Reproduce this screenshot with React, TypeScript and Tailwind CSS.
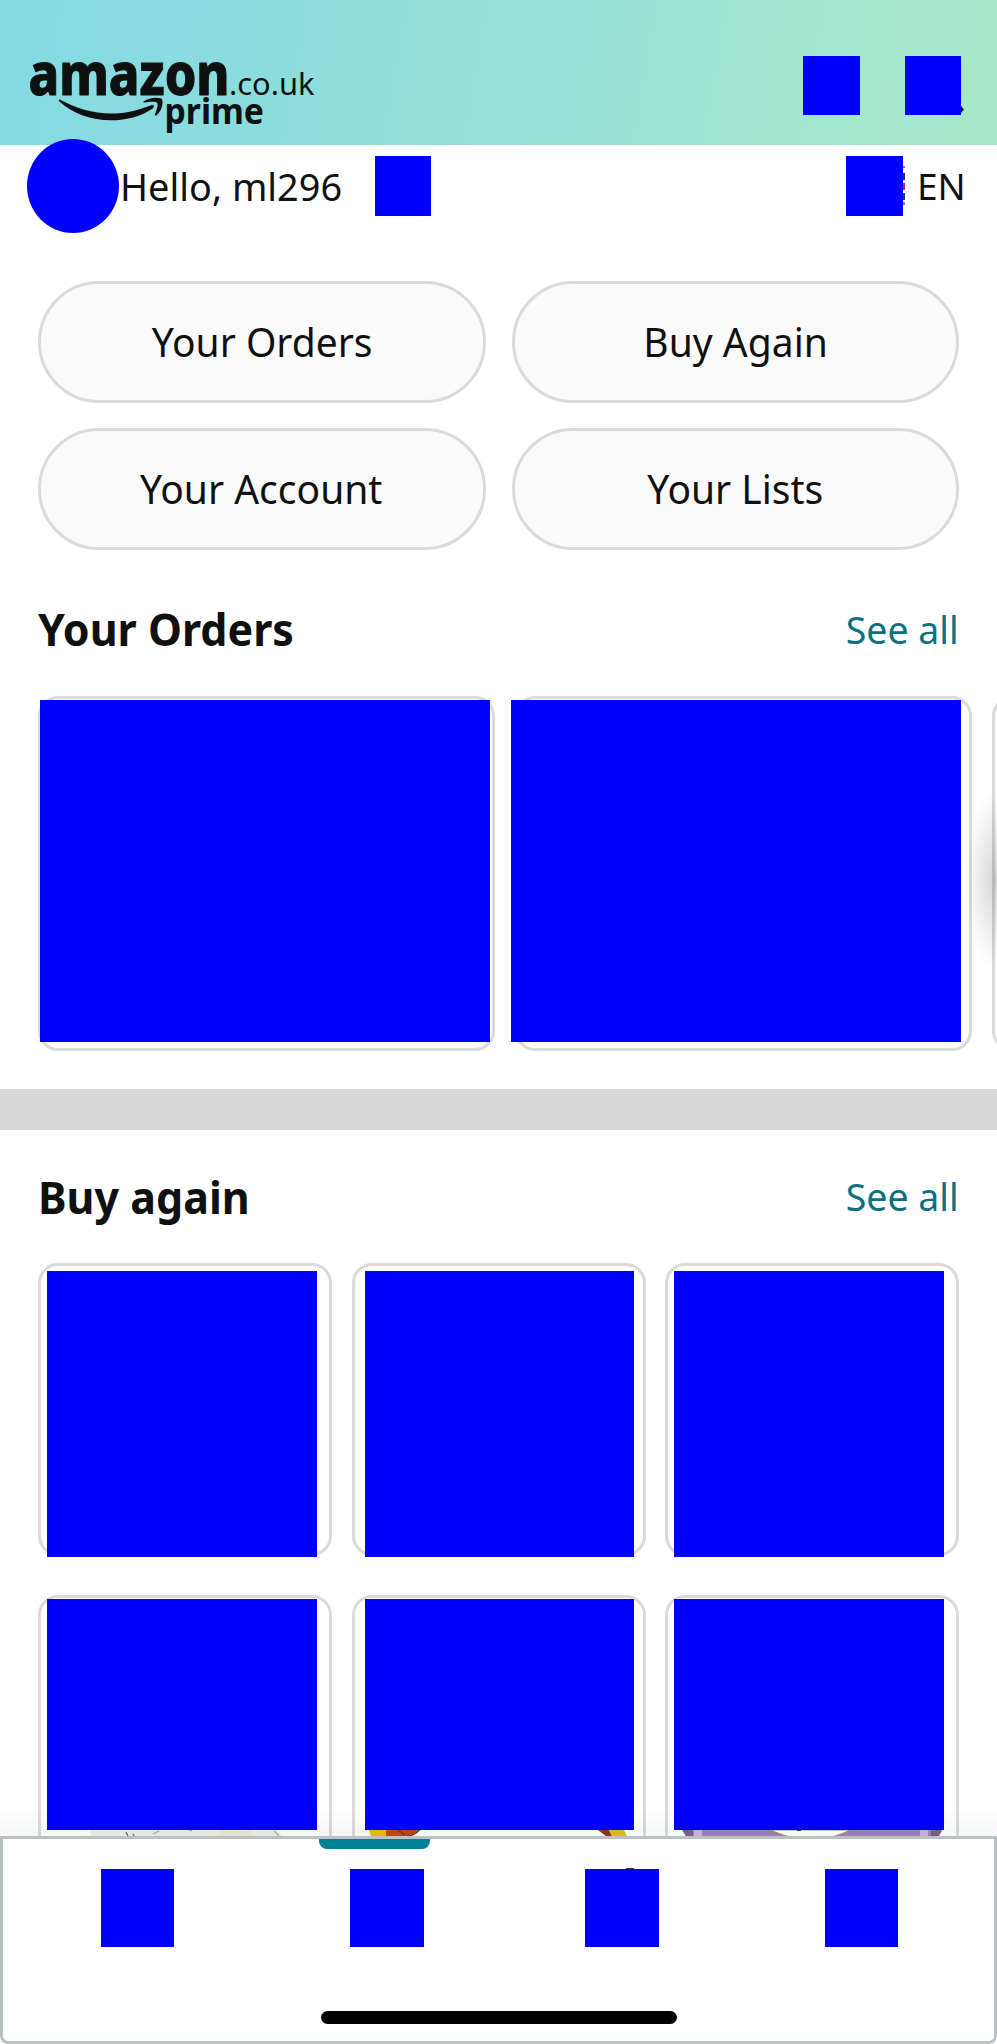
import type { ReactNode } from "react";

function Logo() {
  return (
    <svg
      className="h-[145px] w-[340px] shrink-0"
      viewBox="0 0 340 145"
      fill="#0f1111"
      fontFamily='"Noto Sans", sans-serif'
    >
      <text x="28.5" y="95" fontSize="58.5" fontWeight="800" stroke="#0f1111" strokeWidth="1" textLength="201" lengthAdjust="spacingAndGlyphs">
        amazon
      </text>
      <text x="229" y="94.5" fontSize="31.5" textLength="85.500" lengthAdjust="spacingAndGlyphs">
        .co.uk
      </text>
      <text x="164.500" y="124" fontSize="35.500" fontWeight="700" textLength="99.500" lengthAdjust="spacingAndGlyphs">
        prime
      </text>
      <path d="M60 99.5 C75 108 93 113.500 111 113.500 C126 113.500 139 110 151 105.200 C154 104.500 155 106.500 153 108.200 C142 116 127 120.300 111 120.300 C91 120.300 73 113.500 59.300 101.500 C58.500 100.200 59 99.200 60 99.500 Z" />
      <path d="M143.500 101.500 C149 97.500 156 97 161.500 98.500 C164 101.500 162 111 156.500 115.300 C155 116.300 154.500 115.300 155 114.200 C156.500 110.300 158.500 105 157.300 103 C155.800 101 149 102 145 102.400 C143.300 102.500 142.800 102.200 143.500 101.500 Z" />
    </svg>
  );
}

function Pill({ children }: { children: ReactNode }) {
  return (
    <button className="flex h-[122px] items-center justify-center rounded-full border-[3px] border-[#dadada] bg-[#fafafa] text-[40px]">
      <span className="scale-x-[0.975]">{children}</span>
    </button>
  );
}

function SectionHeader({ title, className }: { title: string; className: string }) {
  return (
    <div className={`flex shrink-0 items-center justify-between pl-[38px] pr-[38px] ${className}`}>
      <h2 className="origin-left scale-x-[0.977] whitespace-nowrap text-[44px] font-bold">{title}</h2>
      <a className="origin-right scale-x-[0.985] whitespace-nowrap text-[38px] text-[#0b7180]">See all</a>
    </div>
  );
}

const card = "shrink-0 border-[3px] border-[#dadada] bg-white rounded-[20px]";

export default function App() {
  return (
    <div className="flex h-[2044px] w-[997px] flex-col overflow-hidden bg-white font-['Noto_Sans',sans-serif] text-[#0f1111]">
      <div className="relative flex h-[1836px] shrink-0 flex-col overflow-hidden">
        <header className="flex h-[145px] shrink-0 justify-between bg-[linear-gradient(100deg,#84d9e3_0%,#8bdddd_28%,#98e1d7_55%,#a3e6d0_78%,#a7e7cb_100%)]">
          <Logo />
          <div className="mr-[33px] mt-[56px] flex items-start gap-[45px]">
            <div className="h-[59px] w-[57px] bg-[#0000ff]" />
            <div className="flex items-end">
              <div className="h-[59px] w-[56px] bg-[#0000ff]" />
              <svg className="mb-[2px] h-[7px] w-[3px]" viewBox="0 0 3 7">
                <path d="M0 0 L3 3.500 L0 7 Z" fill="#0f1111" />
              </svg>
            </div>
          </div>
        </header>

        <div className="relative z-10 flex h-[82px] shrink-0 items-center">
          <div className="ml-[27px] h-[94px] w-[92px] shrink-0 rounded-[50%] bg-[#0000ff]" />
          <span className="ml-[1px] w-[255px] origin-left scale-x-[1.01] whitespace-nowrap pt-[3px] text-[37.5px]">
            Hello, ml296
          </span>
          <div className="h-[60px] w-[56px] shrink-0 bg-[#0000ff]" />
          <div className="ml-auto h-[60px] w-[57px] shrink-0 bg-[#0000ff]" />
          <div className="flex h-[40px] w-[2px] flex-col">
            <div className="h-[2px] bg-[#e05a6a]" />
            <div className="mt-[5px] h-[7px] bg-[#1d3a66]" />
            <div className="mt-[3px] h-[7px] bg-[#d8202f]" />
            <div className="mt-[3px] h-[7px] bg-[#1d3a66]" />
            <div className="mt-[2px] h-[3px] bg-[#e05a6a]" />
          </div>
          <span className="ml-[12px] w-[80px] origin-left scale-x-[1.03] pt-[2px] text-[36px]">EN</span>
        </div>

        <div className="mt-[54px] grid shrink-0 grid-cols-2 gap-x-[26px] gap-y-[25px] px-[38px]">
          <Pill>Your Orders</Pill>
          <Pill>Buy Again</Pill>
          <Pill>Your Account</Pill>
          <Pill>Your Lists</Pill>
        </div>

        <SectionHeader title="Your Orders" className="h-[146px] pt-[12px]" />
        <div className="flex h-[355px] shrink-0 gap-[20px] pl-[38px]">
          <div className={`${card} w-[457px]`}>
            <div className="-ml-px mt-px h-[342px] w-[450px] bg-[#0000ff]" />
          </div>
          <div className={`${card} w-[457px]`}>
            <div className="-ml-[7px] mt-px h-[342px] w-[450px] bg-[#0000ff]" />
          </div>
          <div className={`${card} w-[457px]`} />
        </div>
        <div className="absolute right-0 top-[790px] h-[180px] w-[32px] bg-[radial-gradient(ellipse_at_right,rgba(0,0,0,0.17)_0%,rgba(0,0,0,0.08)_38%,rgba(0,0,0,0)_70%)]" />
        <div className="mt-[38px] h-[41px] shrink-0 bg-[#d8d8d8]" />

        <SectionHeader title="Buy again" className="h-[133px]" />
        <div className="flex shrink-0 justify-between px-[38px]">
          <div className={`${card} h-[293px] w-[294px]`}>
            <div className="ml-[6px] mt-[5px] h-[286px] w-[270px] bg-[#0000ff]" />
          </div>
          <div className={`${card} h-[293px] w-[294px]`}>
            <div className="ml-[10px] mt-[5px] h-[286px] w-[269px] bg-[#0000ff]" />
          </div>
          <div className={`${card} h-[293px] w-[294px]`}>
            <div className="ml-[6px] mt-[5px] h-[286px] w-[270px] bg-[#0000ff]" />
          </div>
        </div>
        <div className="mt-[39px] flex shrink-0 justify-between px-[38px]">
          <div className={`${card} h-[293px] w-[294px]`}>
            <div className="ml-[6px] mt-px h-[231px] w-[270px] bg-[#0000ff]" />
            <svg className="ml-[50px] h-[6px] w-[192px]" viewBox="0 0 192 6">
              <path d="M0 0 H186 L191 6 H0 Z" fill="#eeeeec" />
              <path d="M130 0 H160 V6 H126 Z" fill="#ebe9d8" />
              <path d="M35 2 L37 6 M42 4 L43 6" stroke="#66665f" strokeWidth="1.300" />
              <path d="M62 4 L68 1 M98 0 L101 1 M183 1 L188 6" stroke="#aaaaa2" strokeWidth="1.300" />
            </svg>
          </div>
          <div className={`${card} h-[293px] w-[294px]`}>
            <div className="ml-[10px] mt-px h-[231px] w-[269px] bg-[#0000ff]" />
            <svg className="ml-[14px] h-[6px] w-[262px]" viewBox="0 0 262 6">
              <path d="M0 0 H17 V6 H2 Z" fill="#eac000" />
              <path d="M17 0 H51 C47 4 43 6 38 6 H17 Z" fill="#bd4819" />
              <path d="M51 0 C47 4 43 6 38 6 M29 0 L36 5" stroke="#512b20" fill="none" />
              <path d="M229 0 H240 L243 6 H237 Z" fill="#8f351b" />
              <path d="M240 0 H255 L258 6 H243 Z" fill="#e5bd16" />
            </svg>
          </div>
          <div className={`${card} h-[293px] w-[294px]`}>
            <div className="ml-[6px] mt-px h-[231px] w-[270px] bg-[#0000ff]" />
            <svg className="ml-[14px] h-[6px] w-[260px]" viewBox="0 0 260 6">
              <path d="M0 0 H260 L257 6 H4 Z" fill="#a080bd" />
              <path d="M0 0 H11 V6 H4 Z M249 0 H260 L257 6 H249 Z" fill="#796090" />
              <path d="M12 0 H20 V6 H12 Z M238 0 H246 V6 H238 Z" fill="#c9b3df" />
              <path d="M89 0 H168 C161 4 155 5 150 7 H108 C101 5 95 3 89 0 Z" fill="#ffffff" stroke="#a89272" />
              <path d="M115 0 H119 V1 H115 Z" fill="#333333" />
            </svg>
          </div>
        </div>
        <div className="absolute bottom-0 left-0 h-[30px] w-full bg-[linear-gradient(to_top,rgba(0,0,0,0.035),rgba(0,0,0,0))]" />
      </div>

      <nav className="flex h-[208px] shrink-0 flex-col rounded-b-[8px] border-[3px] border-[#bbc0c2] bg-white">
        <div className="ml-[316px] h-[10px] w-[111px] rounded-b-[8px] bg-[#008296]" />
        <div className="mt-[20px] flex pl-[98px]">
          <div className="h-[78px] w-[73px] bg-[#0000ff]" />
          <div className="ml-[176px] h-[78px] w-[74px] bg-[#0000ff]" />
          <div className="relative ml-[161px] h-[78px] w-[74px] bg-[#0000ff]">
            <div className="absolute -top-[1px] left-[41px] h-[1px] w-[8px] bg-[#333333]" />
          </div>
          <div className="ml-[166px] h-[78px] w-[73px] bg-[#0000ff]" />
        </div>
        <div className="ml-[318px] mt-[64px] h-[13px] w-[356px] rounded-full bg-black" />
      </nav>
    </div>
  );
}
